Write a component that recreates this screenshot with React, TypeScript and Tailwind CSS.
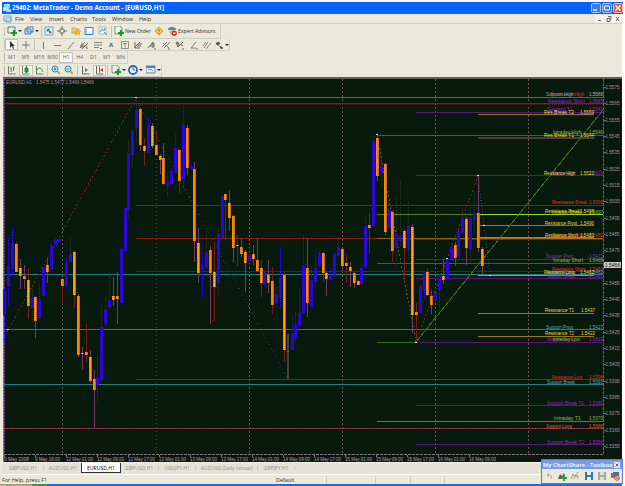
import type { ReactNode } from 'react';

type Candle = [x: number, high: number, top: number, bottom: number, low: number, up?: 1];

const candles: Candle[] = [
  [4, 288, 289, 315, 343, 1], [8, 238, 266, 286, 306, 1], [12, 228, 243, 269, 278, 1], [16, 242, 244, 272, 272],
  [20, 259, 268, 276, 289], [24, 265, 276, 279, 289], [28, 268, 280, 306, 319], [32, 289, 298, 308, 323, 1],
  [35, 297, 297, 321, 338], [39, 284, 300, 318, 320, 1], [43, 267, 268, 296, 296, 1], [47, 258, 265, 272, 283],
  [51, 244, 245, 269, 270, 1], [55, 239, 240, 245, 245, 1], [59, 239, 239, 242, 242, 1], [62, 277, 279, 286, 304],
  [66, 258, 263, 285, 290, 1], [70, 237, 254, 262, 262, 1], [74, 251, 252, 295, 308], [78, 294, 296, 355, 357],
  [82, 347, 353, 354, 370], [86, 324, 352, 355, 362], [90, 350, 357, 381, 382], [94, 370, 379, 390, 429],
  [97, 355, 378, 385, 404, 1], [101, 302, 327, 380, 383, 1], [105, 297, 309, 324, 326, 1], [109, 272, 300, 308, 308, 1],
  [113, 277, 296, 300, 306], [117, 272, 296, 299, 324], [121, 248, 249, 303, 303, 1], [125, 208, 208, 251, 251, 1],
  [128, 139, 153, 210, 218, 1], [132, 129, 131, 155, 168, 1], [136, 97, 110, 128, 142, 1], [140, 108, 109, 145, 151],
  [144, 138, 146, 151, 166], [148, 118, 125, 153, 153, 1], [152, 123, 126, 146, 148], [156, 132, 145, 155, 155],
  [160, 154, 156, 160, 174], [163, 143, 158, 184, 185], [167, 174, 182, 186, 198, 1], [171, 168, 171, 184, 184, 1],
  [175, 134, 148, 172, 173, 1], [179, 149, 150, 181, 193], [183, 105, 125, 180, 188, 1], [187, 125, 128, 168, 175],
  [191, 165, 166, 169, 169, 1], [194, 162, 169, 241, 262], [198, 228, 243, 273, 283], [202, 254, 265, 272, 298, 1],
  [206, 231, 252, 268, 270, 1], [210, 246, 250, 273, 324], [214, 243, 272, 287, 321], [218, 229, 234, 283, 298, 1],
  [222, 196, 196, 238, 238, 1], [225, 193, 194, 200, 240], [229, 190, 203, 218, 231], [233, 215, 216, 248, 262],
  [237, 235, 245, 246, 266], [241, 238, 247, 254, 257], [245, 250, 252, 263, 292], [249, 248, 255, 261, 268, 1],
  [253, 245, 254, 259, 265], [257, 238, 260, 271, 272], [261, 260, 268, 283, 297], [264, 272, 273, 285, 286, 1],
  [268, 260, 275, 283, 293], [272, 267, 281, 305, 314], [276, 287, 294, 303, 308, 1], [280, 248, 278, 297, 307, 1],
  [284, 272, 275, 350, 362], [292, 315, 334, 350, 351, 1], [295, 312, 324, 338, 342, 1], [299, 290, 313, 325, 327, 1],
  [303, 235, 265, 314, 314, 1], [307, 238, 268, 303, 317], [311, 266, 280, 307, 307, 1], [315, 250, 268, 282, 287, 1],
  [319, 252, 253, 266, 266, 1], [323, 252, 253, 273, 282], [326, 272, 273, 279, 296], [330, 268, 275, 280, 282, 1],
  [334, 253, 254, 277, 277, 1], [338, 237, 247, 256, 257, 1], [342, 248, 249, 266, 271], [346, 255, 263, 266, 283],
  [350, 262, 267, 271, 287], [354, 272, 273, 283, 288], [358, 280, 281, 285, 285], [361, 266, 268, 284, 285, 1],
  [365, 215, 226, 267, 268, 1], [369, 213, 225, 228, 253], [373, 136, 141, 226, 227, 1], [377, 134, 138, 176, 181],
  [381, 154, 166, 173, 188, 1], [385, 163, 164, 232, 235], [389, 208, 209, 228, 230, 1], [392, 210, 212, 251, 262],
  [396, 197, 234, 248, 267, 1], [400, 181, 235, 241, 247, 1], [404, 228, 231, 248, 282], [408, 201, 225, 249, 258, 1],
  [412, 224, 227, 315, 333], [416, 303, 312, 315, 342], [420, 285, 286, 313, 313, 1], [424, 272, 273, 290, 300, 1],
  [427, 268, 272, 295, 296], [431, 290, 296, 305, 314], [435, 291, 293, 300, 301, 1], [439, 274, 278, 290, 312, 1],
  [443, 260, 276, 280, 284], [447, 259, 260, 279, 279, 1], [451, 246, 247, 259, 259, 1], [455, 242, 245, 258, 266],
  [458, 230, 231, 256, 257, 1], [462, 209, 218, 233, 234, 1], [466, 217, 219, 248, 265], [470, 205, 218, 249, 262, 1],
  [474, 191, 214, 220, 231, 1], [478, 175, 213, 248, 252], [482, 247, 249, 266, 274],
];

const teal = '#238080';
const purple = '#58197a';
const red = '#8e1c10';
const green = '#3b6c08';
const gold = '#94791b';

// x1, x2, y, colour, height
const levels: [number, number, number, string, number][] = [
  [4, 603, 97, teal, 1], [4, 603, 103, '#6b167a', 1], [136, 603, 205, red, 1], [136, 603, 238, red, 1],
  [136, 603, 271, '#651c18', 1], [4, 603, 274, teal, 1], [4, 603, 329, teal, 1], [136, 603, 379, red, 1],
  [4, 603, 384, teal, 1], [4, 603, 428, '#7d2738', 1],
  [416, 603, 112, purple, 1], [478, 594, 114, gold, 1], [377, 603, 135, green, 1], [478, 594, 137, '#48403a', 2],
  [416, 603, 175, purple, 1], [377, 478, 214, '#527d15', 1], [478, 603, 214, '#9bd81a', 1], [478, 594, 225, gold, 1],
  [377, 478, 238, '#8d6115', 1], [478, 594, 237, '#8a9911', 1], [478, 603, 238, '#b26718', 1], [416, 603, 239, purple, 1],
  [416, 603, 259, purple, 1], [377, 603, 263, green, 1], [478, 594, 275, '#ad9b25', 1], [416, 603, 278, purple, 1],
  [478, 594, 313, gold, 1], [478, 594, 336, gold, 1], [377, 416, 342, green, 1], [416, 603, 342, purple, 1],
  [416, 603, 405, purple, 1], [377, 603, 421, '#66850d', 1], [416, 603, 444, purple, 1],
];

const T = '#45b5bb';
const P = '#9330b8';
const R = '#e53220';
const G = '#8cc233';
const Y = '#f2d843';

// name, x, baseline, name width, price, price x, colour
const labels: [string, number, number, number, string, number, string][] = [
  ['Resistance High', 550, 96, 34, '1.5569', 589, R], ['Support High', 546, 96, 28, '1.5569', 589, T],
  ['Resistance Short', 548, 103, 37, '1.5565', 589, P], ['Support T1', 547, 111, 26, '1.5561', 589, P],
  ['Res Break T2', 544, 114, 30, '1.5559', 580, Y], ['Res Break T1', 544, 137, 30, '1.5544', 580, Y],
  ['Intraday High', 553, 134, 28, '1.5546', 589, G], ['Support High', 552, 175, 24, '1.5521', 589, P],
  ['Resistance High', 544, 175, 31, '1.5521', 580, Y], ['Resistance Break', 552, 204, 35, '1.5503', 589, R],
  ['Intraday Break', 552, 214, 30, '1.5497', 589, G], ['Resistance Break', 545, 213, 35, '1.5498', 580, Y],
  ['Resistance Pivot', 545, 225, 32, '1.5490', 580, Y], ['Resistance Pivot', 552, 237, 33, '1.5482', 589, R],
  ['Resistance Short', 545, 237, 33, '1.5483', 580, Y], ['Support Pivot', 546, 258, 28, '1.5472', 589, P],
  ['Intraday Short', 553, 262, 30, '1.5469', 589, G], ['Resistance Short', 552, 271, 33, '1.5463', 589, R],
  ['Support Break', 547, 278, 28, '1.5460', 589, P], ['Support Long', 547, 274, 27, '1.5462', 589, T],
  ['Resistance Long', 544, 274, 31, '1.5462', 580, Y], ['Resistance T1', 545, 312, 29, '1.5437', 581, Y],
  ['Support Pivot', 546, 329, 27, '1.5427', 589, T], ['Resistance T2', 545, 335, 29, '1.5422', 581, Y],
  ['Support Long', 547, 341, 28, '1.5419', 589, P], ['Intraday Low', 553, 341, 27, '', 589, G],
  ['Resistance Low', 552, 379, 30, '1.5396', 589, R], ['Support Break', 547, 384, 28, '1.5393', 589, T],
  ['Support Break T1', 547, 405, 37, '1.5380', 589, P], ['Intraday  T1', 554, 420, 27, '1.5370', 589, G],
  ['Support Long', 546, 428, 26, '1.5366', 589, '#ec5528'], ['Support Break T2', 547, 444, 37, '1.5356', 589, P],
];

const times = [
  '9 May 2008', '9 May 16:00', '12 May 01:00', '12 May 09:00', '12 May 17:00', '13 May 01:00', '13 May 09:00', '13 May 17:00',
  '14 May 01:00', '14 May 09:00', '14 May 17:00', '15 May 01:00', '15 May 09:00', '15 May 17:00', '16 May 01:00', '16 May 09:00',
];

function Label({ x, y, w, fill, children }: { x: number; y: number; w: number; fill: string; children: string }) {
  return (
    <text x={x} y={y} fill={fill} fontSize="5.2" textLength={w} lengthAdjust="spacingAndGlyphs">
      {children}
    </text>
  );
}

function Chart() {
  return (
    <svg
      width="619"
      height="385"
      viewBox="3 77 619 385"
      className="block bg-[#08190d] font-['Liberation_Sans',sans-serif]"
      shapeRendering="crispEdges"
    >
      <rect x="3" y="77" width="619" height="2" fill="#665c60" />
      <path d="M3.5 78v384" stroke="#77776b" />
      <path d="M4.5 79v375" stroke="#6f3474" strokeDasharray="2 1" />
      {[62, 156, 249, 342, 435, 528].map((x) => (
        <path key={x} d={`M${x}.5 79v375`} stroke={x === 156 ? '#65316d' : '#66565b'} strokeDasharray={x === 156 ? '1 3' : '2 2'} />
      ))}
      {levels.map(([x1, x2, y, fill, h], i) => (
        <rect key={i} x={x1} y={y} width={x2 - x1} height={h} fill={fill} />
      ))}
      <path d="M4 104.5h599" stroke="#53202c" strokeDasharray="1 1" />
      <path d="M4 428.5h599" stroke="#b14a56" strokeDasharray="1 2" />

      <g fill="none" strokeWidth="1">
        <path d="M7 332L136 98" stroke="#731e12" strokeDasharray="2 2" />
        <path d="M136 98L288 379" stroke="#114352" strokeDasharray="1 3" />
        <path d="M377 136L416 342" stroke="#3c6517" strokeDasharray="2 2" />
        <path d="M416 342L478 176" stroke="#7b2316" strokeDasharray="2 2" />
        <path d="M478 176L484 225L490 275" stroke="#17516c" strokeDasharray="1 2" />
        <path d="M416 342L603 110" stroke="#3f7018" />
      </g>

      <rect x="287" y="334" width="2" height="45" fill="#48443a" />
      <rect x="287" y="351" width="2" height="1" fill="#8c7b18" />
      {candles.map(([x, high, top, bottom, low, up], i) => (
        <g key={x}>
          <path
            d={`M${x}.5 ${high}V${low}`}
            stroke={up ? '#2f10f0' : i % 3 ? '#743c62' : '#792010'}
            strokeDasharray={up ? '1 1' : undefined}
          />
          <rect x={x - 1} y={top} width="3" height={bottom - top} fill={up ? '#2b05dd' : '#ff8700'} />
          {!up && <path d={`M${x + 1}.5 ${top}V${bottom}`} stroke="#c06c12" />}
          {!up && i % 2 === 0 && <path d={`M${x}.5 ${top}V${bottom}`} stroke="#ffc62d" strokeDasharray="1 1" />}
        </g>
      ))}
      {[[8, 329], [136, 97], [377, 134], [416, 342], [478, 175], [447, 258], [484, 225], [490, 275]].map(([x, y]) => (
        <rect key={x} x={x - 1} y={y} width="2" height="1" fill="#e4e4df" />
      ))}

      <path d="M4 454.5H603" stroke="#84727c" strokeDasharray="3 1" />
      <path d="M603.5 79V455" stroke="#786173" strokeDasharray="3 1" />
      <Label x={6} y={84} w={26} fill="#b394ac">EURUSD,H1</Label>
      <Label x={36} y={84} w={58} fill="#b394ac">1.5475 1.5477 1.5460 1.5466</Label>
      {labels.map(([name, x, y, w, price, px, fill], i) => (
        <g key={i}>
          <Label x={x} y={y} w={w} fill={fill}>{name}</Label>
          {price && <Label x={px} y={y} w={14} fill={fill}>{price}</Label>}
        </g>
      ))}
      {Array.from({ length: 23 }, (_, i) => (
        <g key={i}>
          <rect x="604" y={Math.round(87 + i * 16.32)} width="2" height="1" fill="#80687b" />
          {i !== 11 && (
            <Label x={605.5} y={89 + i * 16.32} w={14} fill="#ad92a8">{(1.5575 - i * 0.001).toFixed(4)}</Label>
          )}
        </g>
      ))}
      <rect x="604" y="262" width="17" height="6" fill="#c8c5c4" />
      <Label x={605} y={267} w={15} fill="#202020">1.5466</Label>
      {times.map((t, i) => (
        <g key={t}>
          <rect x={4 + i * 31} y="455" width="1" height="2" fill="#85717f" />
          <Label x={4 + i * 31} y={461} w={i < 2 ? 25 : 27} fill="#b79eaf">{t}</Label>
        </g>
      ))}
    </svg>
  );
}

function Ico({ children, w = 10 }: { children: ReactNode; w?: number }) {
  return (
    <svg width={w} height="10" viewBox={`0 0 ${w} 10`} fill="none" className="shrink-0">
      {children}
    </svg>
  );
}

function Slot({ w, on, children }: { w: string; on?: boolean; children: ReactNode }) {
  return (
    <div className={`flex h-[11px] shrink-0 items-center justify-center ${w} ${on ? 'border border-[#c5c3b5] bg-[#f8f7f1]' : ''}`}>
      {children}
    </div>
  );
}

function Bar({ w, h, children }: { w: string; h: string; children: ReactNode }) {
  return (
    <div className={`flex shrink-0 items-center border-r border-b border-[#d2d0c2] ${w} ${h}`}>
      <div className="ml-[2px] h-[9px] w-px shrink-0 bg-[#c1bfae]" />
      {children}
    </div>
  );
}

const Sep = () => <div className="mx-px h-[11px] w-px shrink-0 bg-[#c5c3b5]" />;
const Plus = () => <path d="M7 4v6M4 7h6" stroke="#18972a" strokeWidth="2.2" />;
const Drop = () => <path d="M11 4h4l-2 2z" fill="#222" />;

function Magnifier({ plus }: { plus?: boolean }) {
  return (
    <Ico>
      <path d="M6 6l3 3" stroke="#d0a53b" strokeWidth="2" />
      <circle cx="4" cy="4" r="3" fill="#d5f1ff" stroke="#397cc5" />
      <path d={plus ? 'M2.5 4h3M4 2.5v3' : 'M2.5 4h3'} stroke="#266dad" />
    </Ico>
  );
}

function Toolbars() {
  return (
    <div className="flex h-[53px] flex-col items-start">
      <Bar w="w-[219px]" h="h-[15px]">
        <Slot w="w-[18px]"><Ico w={15}><path d="M1 1h7v6H1z" fill="#e7f3e8" stroke="#568267" /><Plus /><Drop /></Ico></Slot>
        <Slot w="w-[17px]"><Ico w={15}><path d="M3 1h6v5H3zM1 3h6v5H1z" fill="#d8ebff" stroke="#397bbb" /><Drop /></Ico></Slot>
        <Sep />
        <Slot w="w-[12px]"><Ico><path d="M1 1h8v8H1z" fill="#dcf2ff" stroke="#69a9d1" /><path d="M3 5l2-2" stroke="#159532" strokeWidth="2" /><path d="M5 5l2 2" stroke="#d33a1b" strokeWidth="2" /></Ico></Slot>
        <Slot w="w-[14px]"><Ico><circle cx="5" cy="5" r="2.5" stroke="#77776f" /><path d="M5 0v4M5 6v4M0 5h4M6 5h4" stroke="#77776f" /></Ico></Slot>
        <Slot w="w-[13px]"><Ico><path d="M1 2h3l1 1h3v4H1z" fill="#f5d577" stroke="#d4a144" /><path d="M6 3l1 2 3 .3-2 1.5.6 2.2L6 8 4 9l.6-2.2L3 5.3 5 5z" fill="#ffb823" stroke="#df8c20" strokeWidth=".5" /></Ico></Slot>
        <Slot w="w-[14px]"><Ico><path d="M1 1.5h8v7H1z" fill="#fff" stroke="#397dcb" /><path d="M2 3v5" stroke="#7ec5ef" strokeWidth="2" /></Ico></Slot>
        <Slot w="w-[14px]"><Ico><path d="M1 1h7v7H1z" fill="#eaf5fb" stroke="#a1c0ce" /><path d="M2 6l2-3 2 2 1-3M6 6l3 3" stroke="#6a89a2" /></Ico></Slot>
        <Sep />
        <Slot w="w-[12px]"><Ico><path d="M1 0h5l2 2v6H1z" fill="#edf5eb" stroke="#7b9a87" /><Plus /></Ico></Slot>
        <span className="w-[28px] text-[5.2px] tracking-[-0.1px] whitespace-nowrap">New Order</span>
        <Slot w="w-[12px]"><Ico><path d="M5 1l4 4-4 4-4-4z" fill="#f9ca52" stroke="#d7a02e" /><path d="M5 3v2.5M5 7v1" stroke="#94691c" /></Ico></Slot>
        <Slot w="w-[13px]"><Ico><path d="M1 4q0-3 4-3t4 3z" fill="#4385d2" /><circle cx="4" cy="6" r="2" fill="#efb76b" /><circle cx="7.2" cy="7.2" r="2.6" fill="#d92b19" /><path d="M6 6.5h2.4v1.5H6z" fill="#fff" /></Ico></Slot>
        <span className="text-[5.2px] whitespace-nowrap">Expert Advisors</span>
      </Bar>
      <Bar w="w-[228px]" h="h-[12px]">
        <Slot w="w-[13px]" on><Ico w={8}><path d="M2 1v7l2-2 1 3 1-.5L5 6h2z" fill="#333" /></Ico></Slot>
        <Slot w="w-[15px]"><Ico><path d="M5 1v8M1 5h8" stroke="#77776f" /></Ico></Slot>
        <Sep />
        <Slot w="w-[14px]"><Ico><path d="M5.5 2v7" stroke="#77776f" /></Ico></Slot>
        <Slot w="w-[14px]"><Ico><path d="M2 5.5h7" stroke="#77776f" /></Ico></Slot>
        <Slot w="w-[13px]"><Ico><path d="M2 9l6-7" stroke="#77776f" /></Ico></Slot>
        <Slot w="w-[14px]"><Ico><path d="M1 8l5-6M3 9l6-6M1 6h7M3 3v5" stroke="#6c6c62" /><path d="M7 8h2" stroke="#a34b3b" /></Ico></Slot>
        <Slot w="w-[13px]"><Ico><path d="M1 2.5h8M1 5h8M1 7.5h5" stroke="#6c6c62" strokeWidth=".8" /><path d="M7 8.5h2" stroke="#a34b3b" /></Ico></Slot>
        <Slot w="w-[14px]"><span className="text-[6px] font-bold text-[#55554d]">A</span></Slot>
        <Slot w="w-[13px]"><Ico><path d="M1.5 1.5h7v7h-7zM3 3.5h4M5 3.5v4" stroke="#85857a" strokeWidth=".9" /></Ico></Slot>
        <Slot w="w-[14px]"><Ico><path d="M1 8l6-6M2 8h5M4 6h4M5 4h4M2 2v6" stroke="#68685f" /></Ico></Slot>
        <Slot w="w-[14px]"><Ico><path d="M1 8l5-6v6M3 6h5M4 4h4" stroke="#68685f" /><path d="M7 9h2" stroke="#a34b3b" /></Ico></Slot>
        <Slot w="w-[14px]"><Ico><path d="M1 7l5-5M3 8l6-6M2 3l6 5" stroke="#7b7b70" /><path d="M7 9h2" stroke="#a34b3b" /></Ico></Slot>
        <Slot w="w-[14px]"><Ico><path d="M1 2l7 4M1 2l2 5 5-5M3 7V2" stroke="#68685f" /><path d="M7 9h2" stroke="#a34b3b" /></Ico></Slot>
        <Slot w="w-[13px]"><Ico><path d="M2 8l5-6M2 8h5" stroke="#7b7b70" /><path d="M7 9h2" stroke="#a34b3b" /></Ico></Slot>
        <Slot w="w-[13px]"><Ico><path d="M2 8l4-6M4 9l5-6M1 6l3-4" stroke="#85857a" /></Ico></Slot>
        <Slot w="w-[16px]"><Ico w={15}><path d="M2 3l3-1 1 2-3 1zM4 5l3 3M6 6l3 2-2 1z" fill="#44443e" stroke="#44443e" strokeWidth=".5" /><Drop /></Ico></Slot>
      </Bar>
      <Bar w="w-[126px]" h="h-[13px]">
        <div className="flex text-[5.2px] text-[#62625b]">
          {['M1', 'M5', 'M15', 'M30', 'H1', 'H4', 'D1', 'W1', 'MN'].map((p) => (
            <Slot key={p} w="w-[13.6px]" on={p === 'H1'}>{p}</Slot>
          ))}
        </div>
      </Bar>
      <Bar w="w-[160px]" h="h-[13px]">
        <Slot w="w-[14px]"><Ico><path d="M1.5 1v8h7" stroke="#77776f" /><path d="M4 2v5M6.5 2v4M6.5 2H8" stroke="#29924a" /></Ico></Slot>
        <Slot w="w-[14px]" on><Ico><path d="M1.5 1v8h7" stroke="#77776f" /><path d="M4 3h3v4H4zM5.5 1v7" fill="#2eb34b" stroke="#168d34" /></Ico></Slot>
        <Slot w="w-[13px]"><Ico><path d="M1.5 1v8h7" stroke="#77776f" /><path d="M2 5q3-5 6 2" stroke="#29924a" /></Ico></Slot>
        <Sep />
        <Slot w="w-[13px]"><Magnifier plus /></Slot>
        <Slot w="w-[14px]"><Magnifier /></Slot>
        <Sep />
        <Slot w="w-[14px]"><Ico><path d="M1.5 1v8h7" stroke="#68685f" /><path d="M4 3l3 2-3 2z" fill="#2a944b" /></Ico></Slot>
        <Slot w="w-[13px]" on><Ico><path d="M1.5 1v8h7M4.5 1v7" stroke="#68685f" /><path d="M8 3L5 5l3 2z" fill="#c73a23" /></Ico></Slot>
        <Sep />
        <Slot w="w-[18px]"><Ico w={15}><path d="M1 0h5l2 2v6H1z" fill="#e8efe7" stroke="#729580" /><Plus /><Drop /></Ico></Slot>
        <Slot w="w-[17px]"><Ico w={15}><circle cx="5" cy="5" r="4" fill="#edf8ff" stroke="#2765c4" strokeWidth="1.8" /><path d="M5 2v3h2" stroke="#2765c4" /><Drop /></Ico></Slot>
        <Slot w="w-[18px]"><Ico w={15}><path d="M0 1h9v7H0z" fill="#eaf5ff" stroke="#4285c6" /><path d="M0 2h9" stroke="#4285c6" strokeWidth="2" /><path d="M2 5l2-1 3 2" stroke="#d06c3a" /><Drop /></Ico></Slot>
      </Bar>
    </div>
  );
}

const menu = [
  ['File', 'w-[15px]'], ['View', 'w-[19px]'], ['Insert', 'w-[21px]'], ['Charts', 'w-[22px]'],
  ['Tools', 'w-[20px]'], ['Window', 'w-[27px]'], ['Help', 'w-[20px]'],
];

const tabs = [
  ['GBPUSD,H1', 'w-[41px]'], ['AUDUSD,H1', 'w-[36px]'], ['EURUSD,H1', 'w-[40px]'], ['GBPUSD,H1', 'w-[39px]'],
  ['USDJPY,H1', 'w-[37px]'], ['AUDUSD,Daily (visual)', 'w-[62px]'], ['GBPJPY,H1', 'w-[37px]'],
];

function Toolbox() {
  return (
    <div className="absolute top-[459px] left-[541px] flex h-[25px] w-[82px] flex-col border border-[#597dcc] bg-[#ebe9da]">
      <div className="flex h-[9px] items-center justify-between bg-[#779be6] pr-[2px] pl-px text-[5.7px] font-bold whitespace-nowrap text-[#e8f0ff]">
        <span>My ChartShare - Toolbox</span>
        <svg width="6" height="6" viewBox="0 0 6 6"><path d="M0 0h6v6H0z" fill="#e8e8ef" /><path d="M1.5 1.5l3 3m0-3l-3 3" stroke="#5b6679" /></svg>
      </div>
      <div className="flex flex-1 items-center justify-around">
        <Ico><path d="M7 8q2-4-4-4M5 2L3 4l2 2" stroke="#b29e91" /></Ico>
        <Ico><path d="M1 8l2-5 2 2 2-3 2 6z" fill="#54605a" /><path d="M7 4v6M4 7h6" stroke="#22a832" strokeWidth="2" /></Ico>
        <Ico><path d="M1 8l2-5 2 2 3-4M3 8l5-4M2 5h6v3" stroke="#a3a294" /></Ico>
        <Ico><path d="M1 1h8v8H1z" fill="#3474bd" /><path d="M3 1h4v3H3zM3 6h4v3H3z" fill="#e5f1fa" /></Ico>
        <Ico><path d="M1 1h8v8H1z" fill="#aaa99b" /><path d="M3 1h4v3H3zM3 6h4v3H3z" fill="#e3e1d5" /></Ico>
        <Ico><path d="M1 2h6v5H1z" fill="#8c6f60" /><path d="M3 1h6v4H3z" fill="#3972b6" /><circle cx="7" cy="7" r="2.3" fill="#f7d2b7" stroke="#dc401c" /><path d="M5.5 5.5l3 3" stroke="#dc401c" /></Ico>
      </div>
    </div>
  );
}

export default function App() {
  return (
    <div className="relative flex h-[486px] w-[625px] flex-col overflow-hidden bg-white pt-[2px] font-['Open_Sans',sans-serif] text-[5.4px] leading-[8px] text-[#30302c]">
      <header className="mr-[2px] ml-[2px] flex h-[12px] shrink-0 items-center bg-[#0563f8] text-white">
        <Ico><path d="M2 1h6v4H2z" fill="#aad8f6" /><path d="M1 4h6v4H1zM4 6h5v3H4z" fill="#d9f3ff" stroke="#48a1dd" strokeWidth=".5" /></Ico>
        <h1 className="w-[153px] text-[6.2px] font-bold whitespace-nowrap">29402: MetaTrader - Demo Account - [EURUSD,H1]</h1>
        <div className="ml-auto flex gap-px">
          <svg width="10" height="10" viewBox="0 0 10 10"><rect x=".5" y=".5" width="9" height="9" rx="1" fill="#347ce8" stroke="#a9caff" /><path d="M2 7h4" stroke="#fff" strokeWidth="1.5" /></svg>
          <svg width="10" height="10" viewBox="0 0 10 10"><rect x=".5" y=".5" width="9" height="9" rx="1" fill="#347ce8" stroke="#a9caff" /><path d="M2.5 3h5v4h-5z" fill="none" stroke="#fff" /></svg>
          <svg width="10" height="10" viewBox="0 0 10 10"><rect x=".5" y=".5" width="9" height="9" rx="1" fill="#e9582d" stroke="#ffc0a4" /><path d="M2.5 2.5l5 5m0-5l-5 5" stroke="#fff" strokeWidth="1.5" /></svg>
        </div>
      </header>
      <div className="mr-[3px] flex h-[475px] flex-col bg-[#ebe9da] pl-[2px]">
        <nav className="flex h-[10px] shrink-0 items-center border-b border-[#d2d0c2]">
          <svg width="13" height="8" viewBox="0 0 13 8"><path d="M2 1h7v5H2zM4 3h5v4H4z" fill="#e4f4ff" stroke="#68a8d5" /></svg>
          {menu.map(([name, w]) => (
            <span key={name} className={`shrink-0 text-[5.6px] ${w}`}>{name}</span>
          ))}
          <svg width="27" height="8" viewBox="0 0 27 8" fill="none" stroke="#66665f" className="ml-auto">
            <path d="M0 0h27v8H0z" fill="#f4f3ec" stroke="none" />
            <path d="M3 5.5h3M12 3.5h3v3h-3zM13 1.5h3v3M21 2l3 4m0-4l-3 4" />
          </svg>
        </nav>
        <Toolbars />
        <main className="ml-px h-[385px] w-[619px] shrink-0">
          <Chart />
        </main>
        <div className="flex h-[12px] shrink-0 items-start border-t border-[#f4f3eb] bg-[#e5e3d5] pl-[2px] text-[5.1px] text-[#929084]">
          {tabs.map(([name, w], i) => (
            <div
              key={i}
              className={`flex h-[10px] shrink-0 items-center justify-center whitespace-nowrap ${w} ${
                i === 2 ? 'border border-t-0 border-[#333] bg-white text-black' : ''
              }`}
            >
              <span className={i === 2 ? '' : 'flex-1 text-center'}>{name}</span>
              {i !== 1 && i !== 2 && <span>|</span>}
            </div>
          ))}
        </div>
        <footer className="flex h-[10px] shrink-0 items-center border-t border-white text-[5.4px]">
          <span className="w-[274px]">For Help, press F1</span>
          <span className="w-[50px]">Default</span>
          {['w-[49px]', 'w-[35px]', 'w-[34px]', 'w-[34px]'].map((w, i) => (
            <span key={i} className={`h-[8px] border-l border-[#cfcdbf] ${w}`} />
          ))}
        </footer>
      </div>
      <div className="absolute bottom-0 left-0 flex h-[2px] w-[622px] bg-[#1c6bed]">
        <div className="w-[32px] bg-[#a7a575]" />
        <div className="w-[15px] bg-[#3c9645]" />
      </div>
      <Toolbox />
    </div>
  );
}
